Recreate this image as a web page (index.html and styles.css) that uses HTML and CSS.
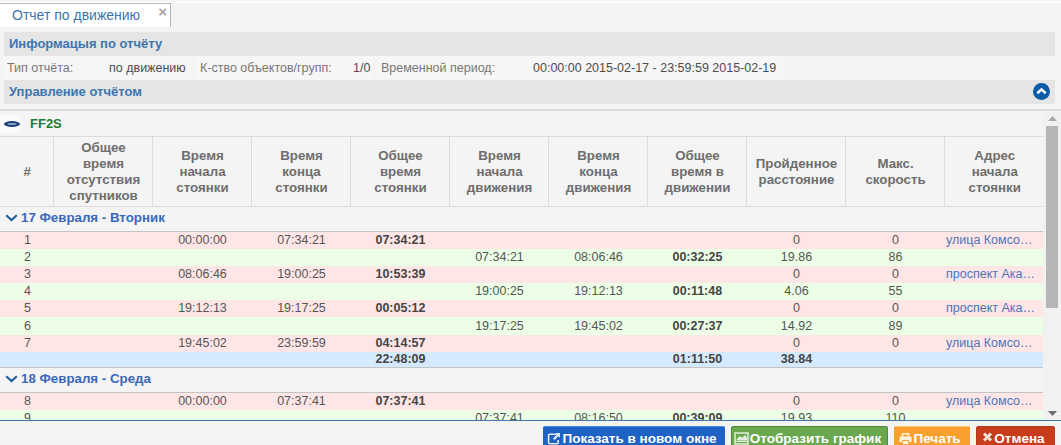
FILE: index.html
```html
<!DOCTYPE html>
<html lang="ru">
<head>
<meta charset="utf-8">
<title>Отчет по движению</title>
<link rel="stylesheet" href="styles.css">
</head>
<body>
<div class="tabs"><div class="tab"><span>Отчет по движению</span><span class="tab-x">×</span></div></div>
<section class="panel">
  <h2 class="section-title">Информацыя по отчёту</h2>
  <div class="info">
    <div class="info-cell c1"><span class="lbl">Тип отчёта:</span><span>по движению</span></div>
    <div class="info-cell c2"><span class="lbl">К-ство объектов/групп:</span><span>1/0</span></div>
    <div class="info-cell c3"><span class="lbl">Временной период:</span><span>00:00:00 2015-02-17 - 23:59:59 2015-02-19</span></div>
  </div>
  <h2 class="section-title manage">Управление отчётом
    <svg class="collapse" width="17" height="17" viewBox="0 0 17 17"><circle cx="8.5" cy="8.5" r="8.5" fill="#0a5ca8"/><path d="M4.3 10.2 8.5 6.4l4.2 3.8" fill="none" stroke="#fff" stroke-width="2.6"/></svg>
  </h2>
</section>
<main class="report">
  <div class="report-main">
    <div class="unit">
      <span class="logo-box"><svg class="logo" width="16" height="6" viewBox="0 0 16 6"><ellipse cx="8" cy="3" rx="8" ry="3" fill="#1c3f78"/><ellipse cx="8" cy="3" rx="4.5" ry="1.1" fill="#8fa6cb"/></svg></span>
      <span>FF2S</span>
    </div>
    <div class="table-clip">
      <table>
        <thead>
          <tr>
            <th class="num">#</th><th>Общее<br>время<br>отсутствия<br>спутников</th><th>Время<br>начала<br>стоянки</th><th>Время<br>конца<br>стоянки</th><th>Общее<br>время<br>стоянки</th><th>Время<br>начала<br>движения</th><th>Время<br>конца<br>движения</th><th>Общее<br>время в<br>движении</th><th>Пройденное<br>расстояние</th><th>Макс.<br>скорость</th><th>Адрес<br>начала<br>стоянки</th>
          </tr>
        </thead>
        <tbody>
          <tr class="group"><td colspan="11"><svg class="chev" width="13" height="8" viewBox="0 0 13 8"><path d="M1.2 1.2 6.5 6l5.3-4.8" fill="none" stroke="#1f5f9f" stroke-width="2.2"/></svg>17 Февраля - Вторник</td></tr>
          <tr class="stop"><td>1</td><td></td><td>00:00:00</td><td>07:34:21</td><td class="b">07:34:21</td><td></td><td></td><td></td><td>0</td><td>0</td><td class="addr">улица Комсо…</td></tr>
          <tr class="move"><td>2</td><td></td><td></td><td></td><td></td><td>07:34:21</td><td>08:06:46</td><td class="b">00:32:25</td><td>19.86</td><td>86</td><td></td></tr>
          <tr class="stop"><td>3</td><td></td><td>08:06:46</td><td>19:00:25</td><td class="b">10:53:39</td><td></td><td></td><td></td><td>0</td><td>0</td><td class="addr">проспект Ака…</td></tr>
          <tr class="move"><td>4</td><td></td><td></td><td></td><td></td><td>19:00:25</td><td>19:12:13</td><td class="b">00:11:48</td><td>4.06</td><td>55</td><td></td></tr>
          <tr class="stop"><td>5</td><td></td><td>19:12:13</td><td>19:17:25</td><td class="b">00:05:12</td><td></td><td></td><td></td><td>0</td><td>0</td><td class="addr">проспект Ака…</td></tr>
          <tr class="move"><td>6</td><td></td><td></td><td></td><td></td><td>19:17:25</td><td>19:45:02</td><td class="b">00:27:37</td><td>14.92</td><td>89</td><td></td></tr>
          <tr class="stop"><td>7</td><td></td><td>19:45:02</td><td>23:59:59</td><td class="b">04:14:57</td><td></td><td></td><td></td><td>0</td><td>0</td><td class="addr">улица Комсо…</td></tr>
          <tr class="total"><td></td><td></td><td></td><td></td><td>22:48:09</td><td></td><td></td><td>01:11:50</td><td>38.84</td><td></td><td></td></tr>
          <tr class="group"><td colspan="11"><svg class="chev" width="13" height="8" viewBox="0 0 13 8"><path d="M1.2 1.2 6.5 6l5.3-4.8" fill="none" stroke="#1f5f9f" stroke-width="2.2"/></svg>18 Февраля - Среда</td></tr>
          <tr class="stop"><td>8</td><td></td><td>00:00:00</td><td>07:37:41</td><td class="b">07:37:41</td><td></td><td></td><td></td><td>0</td><td>0</td><td class="addr">улица Комсо…</td></tr>
          <tr class="move"><td>9</td><td></td><td></td><td></td><td></td><td>07:37:41</td><td>08:16:50</td><td class="b">00:39:09</td><td>19.93</td><td>110</td><td></td></tr>
        </tbody>
      </table>
    </div>
  </div>
  <div class="scrollbar">
    <svg class="sb-arrow" width="9" height="5" viewBox="0 0 9 5"><path d="M4.5 0 9 5H0z" fill="#a8a8a8"/></svg>
    <div class="sb-track"><div class="sb-thumb"></div></div>
    <svg class="sb-arrow" width="9" height="5" viewBox="0 0 9 5"><path d="M0 0h9L4.5 5z" fill="#6f6f6f"/></svg>
  </div>
</main>
<footer class="actions">
  <button class="btn blue"><svg width="14" height="13" viewBox="0 0 14 13"><path d="M9 2.200H2.600a1 1 0 0 0-1 1v7.600a1 1 0 0 0 1 1h7.600a1 1 0 0 0 1-1V8" fill="none" stroke="#dfe9f7" stroke-width="1.600"/><path d="M8.200 1H13v4.800l-1.700-1.500L7.600 8 6 6.400l3.700-3.700z" fill="#dfe9f7"/></svg>Показать в новом окне</button>
  <button class="btn green"><svg width="15" height="13" viewBox="0 0 15 13"><path d="M1 1h13v11H1z" fill="none" stroke="#e3f0dc" stroke-width="1.500"/><path d="M1 9.500h13M3 8l2-3h2l1 1.500 3-3 1.500 2.500v2z" stroke="#e3f0dc" fill="#e3f0dc"/></svg>Отобразить график</button>
  <button class="btn orange"><svg width="13" height="13" viewBox="0 0 13 13"><path d="M3.500 5V1.700h6V5" fill="none" stroke="#fff3df" stroke-width="1.500"/><path d="M1.500 4.500h10a1 1 0 0 1 1 1V10H10V8H3v2H.5V5.500a1 1 0 0 1 1-1zM3.800 9h5.400v3H3.800z" fill="#fff3df"/></svg>Печать</button>
  <button class="btn red"><svg width="11" height="10" viewBox="0 0 11 10"><path d="M2 1.500l7 7m0-7l-7 7" stroke="#f6dfd8" stroke-width="3"/></svg>Отмена</button>
</footer>
</body>
</html>
```
FILE: styles.css
```css
* { box-sizing: border-box; }
html, body { margin: 0; height: 445px; overflow: hidden; }
body { background: #f4f4f4; font: 12.5px "Liberation Sans", Arial, sans-serif; color: #555; display: flex; flex-direction: column; }
.tabs { height: 26px; margin-top: 2px; flex: none; border-top: 1px solid #fff; }
.tab { width: 171px; height: 24px; background: #fff; border: 1px solid #b5b5b5; border-left: 0; border-bottom: 0; color: #3b75ad; font-size: 14px; display: flex; padding: 3px 0 0 12px; justify-content: space-between; }
.tab-x { color: #a5a5a5; font-size: 15px; font-weight: bold; line-height: 10px; padding-right: 3px; }
.panel { margin: 4px 6px 0 4px; flex: none; }
.section-title { margin: 0; height: 24px; background: #e5e5e5; color: #3e75b0; font-size: 13px; font-weight: bold; line-height: 24px; padding-left: 5px; position: relative; }
.collapse { position: absolute; right: 5px; top: 3px; }
.info { display: flex; height: 24px; gap: 4px; line-height: 24px; color: #4d4d4d; }
.info-cell { background: #f6f6f6; display: flex; padding-left: 4px; }
.c1 { width: 188px; padding-left: 3px; } .c2 { width: 177px; } .c3 { width: 407px; }
.c1 .lbl { width: 102px; } .c2 .lbl { width: 153px; } .c3 .lbl { width: 152px; }
.lbl { color: #777; flex: none; }
.report { flex: none; height: 312px; margin-top: 5px; display: flex; border-top: 2px solid #dcdcdc; border-bottom: 1px solid #3d7aa8; }
.report-main { width: 1043px; flex: none; }
.unit { height: 25px; display: flex; align-items: center; gap: 10px; font-size: 13px; font-weight: bold; color: #1f7a2e; }
.logo-box { width: 20px; height: 18px; background: #fafafa; display: flex; align-items: center; justify-content: flex-end; }
.table-clip { height: 284px; overflow: hidden; }
table { width: 1043px; table-layout: fixed; border-collapse: collapse; }
th { width: 99px; height: 70px; padding: 0 1px 0 3px; border: 1px solid #dcdcdc; border-width: 1px 0 1px 1px; color: #6e6e6e; font-size: 13.3px; line-height: 16px; font-weight: bold; }
th:first-child { border-left: 0; }
th.num { width: 53px; }
td { padding: 0 3px 0 5px; height: 17.2px; line-height: 15px; text-align: center; color: #555; white-space: nowrap; overflow: hidden; }
.group td { height: 25px; text-align: left; color: #3a68b8; font-size: 13.3px; font-weight: bold; padding: 0 0 3px 5px; border-bottom: 1px solid #c4c4c4; }
.chev { margin-right: 3px; }
.stop td { background: #ffe6e6; }
.move td { background: #ecffe6; }
.total td { background: #d6eaff; height: 16px; font-weight: bold; color: #444; border-bottom: 1px solid #c4c4c4; }
.b { font-weight: bold; color: #444; }
td.addr { color: #4b74b8; text-align: left; padding: 0 2px; }
.scrollbar { width: 18px; flex: none; padding: 5px 0 4px; display: flex; flex-direction: column; align-items: center; gap: 5px; background: #f1f1f1; }
.sb-track { flex: 1; width: 12px; }
.sb-thumb { height: 182px; background: #b5b5b5; }
.actions { flex: 1; display: flex; justify-content: flex-end; gap: 6px; padding: 5px 6px 0 0; }
.btn { height: 26px; border: 1px solid; border-radius: 2px; font: bold 13.5px "Liberation Sans", Arial, sans-serif; padding: 4px 4px 0 0; display: flex; align-items: flex-start; justify-content: center; color: #fff; white-space: nowrap; }
.btn svg { margin: 1px 1px 0 0; flex: none; }
.blue { background: #1f62c6; border-color: #3b8be0 #1f62c6 #1f62c6; width: 182px; }
.green { background: #6aa84f; border-color: #4f8a3a; width: 157px; }
.orange { background: #f9a02d; border-color: #fbc272 #f9a02d #f9a02d; width: 76px; }
.red { background: #c93c1b; border-color: #b7391d; width: 79px; }
```
